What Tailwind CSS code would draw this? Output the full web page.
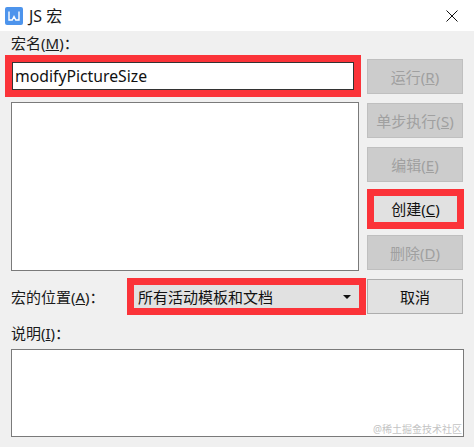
<!DOCTYPE html>
<html lang="en">
<head>
    <meta charset="UTF-8">
    <title>JS 宏</title>
    <script src="https://cdn.jsdelivr.net/npm/@tailwindcss/browser@4"></script>
</head>
<body class="bg-[#f0f0f0]">

<div class="w-[474px] h-[447px] overflow-hidden bg-[#f0f0f0] text-[15px] leading-[20px] text-[#1a1a1a] font-['Noto_Sans','Noto_Sans_CJK_SC',sans-serif]">

    <!-- title bar -->
    <div class="flex items-center h-[31px] bg-white pl-[5px] pr-[16px]">
        <div class="flex items-center justify-center w-[18px] h-[18px] rounded-[2px] bg-[#4d94ec]">
            <svg width="12" height="10" viewBox="0 0 12 10" fill="none" stroke="#fff" stroke-width="1.4"><path d="M1 0.5V9H4.2L6 5.5L7.8 9H11V0.5"/></svg>
        </div>
        <span class="ml-[6px] text-[16px]">JS 宏</span>
        <svg class="ml-auto" width="12" height="12" viewBox="0 0 12 12" fill="none" stroke="#111" stroke-width="1"><path d="M0.5 0.5L11.5 11.5M11.5 0.5L0.5 11.5"/></svg>
    </div>

    <div class="pl-[5px]">
        <div class="flex">
            <!-- left column -->
            <div class="w-[356px]">
                <div class="h-[24px] pl-[6px] flex items-center">宏名(<span class="underline">M</span>)：</div>
                <div class="h-[42px] border-[7px] border-[#fb3339] bg-white">
                    <div class="h-full border border-[#333] flex items-center pl-[2px] text-[15.75px] text-[#111]">modifyPictureSize</div>
                </div>
                <div class="ml-[6px] mt-[5px] w-[348px] h-[169px] bg-white border border-[#7a7a7a]"></div>
            </div>

            <!-- buttons -->
            <div class="ml-[6px] pt-[28px] w-[97px] flex flex-col items-start">
                <button class="w-[96px] h-[35px] bg-[#cccccc] border border-[#bfbfbf] text-[#a0a0a0]">运行(<span class="underline">R</span>)</button>
                <button class="mt-[9px] w-[96px] h-[35px] bg-[#cccccc] border border-[#bfbfbf] text-[#a0a0a0]">单步执行(<span class="underline">S</span>)</button>
                <button class="mt-[9px] w-[96px] h-[35px] bg-[#cccccc] border border-[#bfbfbf] text-[#a0a0a0]">编辑(<span class="underline">E</span>)</button>
                <button class="mt-[7px] w-[97px] h-[40px] bg-[#e1e1e1] border-[7px] border-[#fb3339] text-[#111]">创建(<span class="underline">C</span>)</button>
                <button class="mt-[6px] w-[96px] h-[35px] bg-[#cccccc] border border-[#bfbfbf] text-[#a0a0a0]">删除(<span class="underline">D</span>)</button>
            </div>
        </div>

        <!-- location row -->
        <div class="flex items-start mt-[7px]">
            <div class="w-[122px] h-[37px] pl-[6px] flex items-center">宏的位置(<span class="underline">A</span>)：</div>
            <div class="w-[239px] h-[37px] border-[7px] border-[#fb3339] bg-[#e1e1e1] flex items-center pl-[4px] pr-[8px] text-[#111]">
                <span>所有活动模板和文档</span>
                <span class="ml-auto w-0 h-0 border-x-[4px] border-x-transparent border-t-[4px] border-t-[#111]"></span>
            </div>
            <button class="ml-px mt-px w-[96px] h-[35px] bg-[#e1e1e1] border border-[#adadad] text-[#111]">取消</button>
        </div>

        <div class="pl-[6px] mt-[5px] h-[26px] flex items-center">说明(<span class="underline">I</span>)：</div>
        <div class="relative ml-[6px] mt-[3px] w-[453px] h-[88px] bg-white border border-[#7a7a7a]">
            <span class="absolute right-[1px] bottom-0 text-[10px] leading-[14px] text-[#c4c4c4]">@稀土掘金技术社区</span>
        </div>
    </div>
</div>

</body>
</html>
